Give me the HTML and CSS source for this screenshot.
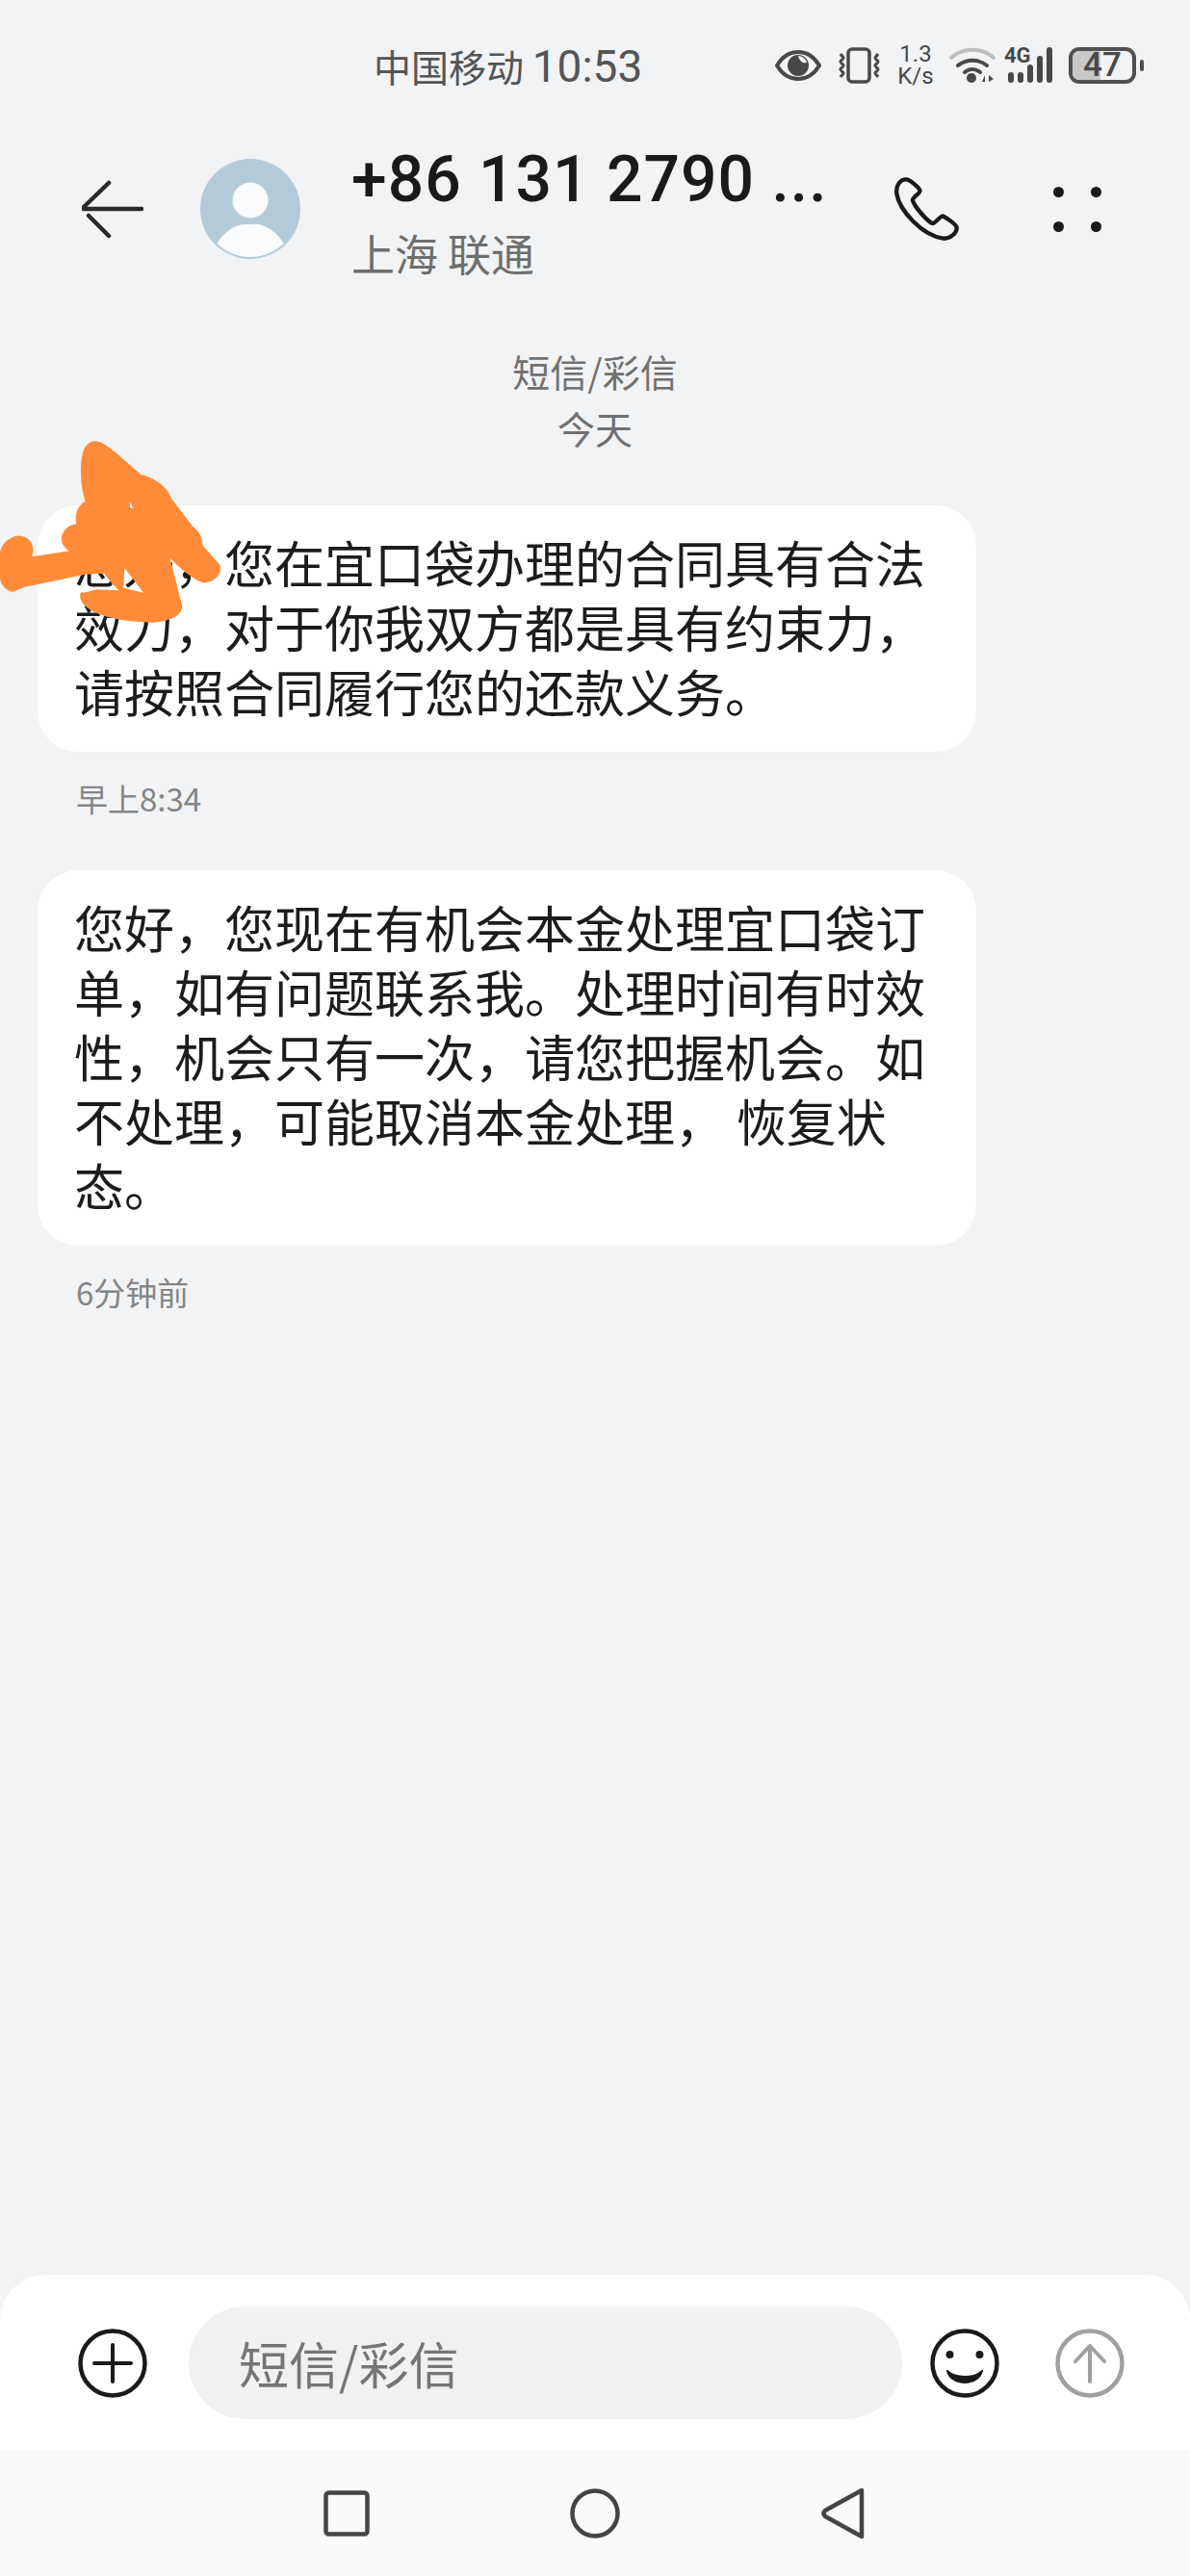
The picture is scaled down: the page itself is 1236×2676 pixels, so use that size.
FILE: index.html
```html
<!DOCTYPE html>
<html lang="zh-CN">
<head>
    <meta charset="UTF-8">
    <title>短信/彩信</title>
    <link rel="stylesheet" href="styles.css">
</head>
<body>
    <div class="status-bar">
        <div class="carrier">中国移动 <span class="clock">10:53</span></div>
        <div class="status-icons">
            <svg class="icon-eye" width="48" height="32" viewBox="0 0 48 32">
                <path d="M2 16C8 6 16 2 24 2s16 4 22 14c-6 10-14 14-22 14S8 26 2 16z" fill="none" stroke="#484848" stroke-width="4" stroke-linejoin="round"/>
                <circle cx="24" cy="16" r="11" fill="#484848"/>
                <path d="M24 6c4 0 8 3 9 7-3 1-7 0-9-7z" fill="#f2f3f5"/>
            </svg>
            <svg class="icon-vibrate" width="46" height="38" viewBox="0 0 46 38">
                <rect x="11" y="2" width="22" height="34" rx="4" fill="none" stroke="#484848" stroke-width="3.5"/>
                <path d="M3 7l3 4-3 4 3 4-3 4 3 4-3 4M42 7l-3 4 3 4-3 4 3 4-3 4 3 4" fill="none" stroke="#484848" stroke-width="3.2" stroke-linejoin="round"/>
            </svg>
            <div class="net-speed">
                <span>1.3</span>
                <span>K/s</span>
            </div>
            <svg class="icon-wifi" width="48" height="38" viewBox="0 0 48 38">
                <path d="M2 11C14 0 34 0 46 11" fill="none" stroke="#bdbdbd" stroke-width="4" stroke-linecap="round"/>
                <path d="M9 19c9-7 21-7 30 0" fill="none" stroke="#484848" stroke-width="4" stroke-linecap="round"/>
                <path d="M16 26c5-4 11-4 16 0" fill="none" stroke="#484848" stroke-width="4" stroke-linecap="round"/>
                <circle cx="23" cy="32" r="5" fill="#484848"/>
                <path d="M34 36l3-7v7zM41 29l5 4-5 3z" fill="#484848"/>
            </svg>
            <div class="signal">
                <span class="signal-label">4G</span>
                <svg width="52" height="38" viewBox="0 0 52 38">
                    <g stroke="#484848" stroke-width="6" stroke-linecap="round">
                        <path d="M3 29v5M13 29v5M23 21v13M33 12v22M43 3v31"/>
                    </g>
                </svg>
            </div>
            <div class="battery">
                <div class="battery-body">
                    <div class="battery-level"></div>
                    <span class="battery-text">47</span>
                </div>
                <div class="battery-tip"></div>
            </div>
        </div>
    </div>

    <div class="top-bar">
        <svg class="back-icon" width="64" height="62" viewBox="0 0 64 62">
            <path d="M2 31h60M2 29L28 4M7 38l21 21" fill="none" stroke="#2a2a2a" stroke-width="4.5" stroke-linecap="round"/>
        </svg>
        <svg class="avatar" width="104" height="104" viewBox="0 0 104 104">
            <defs>
                <clipPath id="avatar-clip"><circle cx="52" cy="52" r="50"/></clipPath>
            </defs>
            <circle cx="52" cy="52" r="52" fill="#b3cbd9"/>
            <circle cx="52" cy="43" r="18.5" fill="#f9fbfc"/>
            <path d="M17 89C24 75 38 68 46 68h12c8 0 22 7 29 21v15H17z" fill="#f9fbfc" clip-path="url(#avatar-clip)"/>
        </svg>
        <div class="contact">
            <div class="contact-number">+86 131 2790 ...</div>
            <div class="contact-place">上海 联通</div>
        </div>
        <svg class="call-icon" width="68" height="68" viewBox="85 40 205 205">
            <path d="M125 50C105 50 92 70 95 95c10 55 80 130 145 140 25 2 45-20 43-35-3-10-33-30-43-35-10 0-25 25-33 23-17-8-57-53-62-73 0-10 23-20 23-30-3-10-33-35-43-35z" fill="none" stroke="#1a1a1a" stroke-width="13" stroke-linejoin="round"/>
        </svg>
        <div class="more-dots">
            <span class="dot"></span>
            <span class="dot"></span>
            <span class="dot"></span>
            <span class="dot"></span>
        </div>
    </div>

    <div class="thread-head">
        <div>短信/彩信</div>
        <div>今天</div>
    </div>

    <div class="messages">
        <div class="bubble">您好，您在宜口袋办理的合同具有合法效力，对于你我双方都是具有约束力，请按照合同履行您的还款义务。</div>
        <div class="msg-time">早上8:34</div>

        <div class="bubble">您好，您现在有机会本金处理宜口袋订单，如有问题联系我。处理时间有时效性，机会只有一次，请您把握机会。如不处理，可能取消本金处理， 恢复状态。</div>
        <div class="msg-time">6分钟前</div>
    </div>

    <div class="composer">
        <svg class="composer-icon" width="72" height="72" viewBox="0 0 72 72">
            <circle cx="36" cy="36" r="33.5" fill="none" stroke="#1a1a1a" stroke-width="4.5"/>
            <path d="M17 36h38M36 17v38" fill="none" stroke="#1a1a1a" stroke-width="4" stroke-linecap="round"/>
        </svg>
        <div class="composer-input">短信/彩信</div>
        <svg class="composer-icon" width="72" height="72" viewBox="0 0 72 72">
            <circle cx="36" cy="36" r="33.5" fill="none" stroke="#1a1a1a" stroke-width="4.5"/>
            <circle cx="20.5" cy="27" r="4" fill="#1a1a1a"/>
            <circle cx="51.5" cy="27" r="4" fill="#1a1a1a"/>
            <path d="M18 44c4 16 32 16 36 0-8 8-28 8-36 0z" fill="#1a1a1a" stroke="#1a1a1a" stroke-width="2" stroke-linejoin="round"/>
        </svg>
        <svg class="composer-icon send-icon" width="72" height="72" viewBox="0 0 72 72">
            <circle cx="36" cy="36" r="33.5" fill="none" stroke="#a0a0a0" stroke-width="4.5"/>
            <path d="M36 55V18M21 34l15-16 15 16" fill="none" stroke="#a0a0a0" stroke-width="4" stroke-linecap="round" stroke-linejoin="round"/>
        </svg>
    </div>

    <div class="nav-bar">
        <div class="nav-cell">
            <svg width="48" height="48" viewBox="0 0 48 48">
                <rect x="2.5" y="2.5" width="43" height="43" rx="3" fill="none" stroke="#444" stroke-width="4.5"/>
            </svg>
        </div>
        <div class="nav-cell">
            <svg width="52" height="52" viewBox="0 0 52 52">
                <circle cx="26" cy="26" r="23.5" fill="none" stroke="#444" stroke-width="4.5"/>
            </svg>
        </div>
        <div class="nav-cell">
            <svg width="46" height="54" viewBox="0 0 46 54">
                <path d="M42 3v48L4 30c-2-2-2-4 0-6z" fill="none" stroke="#444" stroke-width="4.5" stroke-linejoin="round"/>
            </svg>
        </div>
    </div>

    <svg class="scribble" width="250" height="210" viewBox="0 0 750 630">
        <path fill-rule="evenodd" fill="#ff8b38" d="M300 25C330 30 360 60 440 130C490 140 525 175 535 205L600 290C630 310 630 340 632 350L685 410C695 440 665 470 630 465C600 455 560 420 530 390L568 540C565 570 530 585 480 590C400 590 300 575 262 535C245 515 245 490 262 497L300 487L370 490L345 465L325 437L265 440L75 480L40 495C15 490 0 470 -2 440L0 370C10 335 40 318 65 320C95 325 110 350 100 385L215 367C190 350 185 325 200 305C210 290 225 285 238 283C232 260 238 230 265 212C250 160 248 100 258 60C265 35 285 22 300 25ZM388 420L447 497L385 482ZM405 215L417 235L405 232Z"/>
    </svg>
</body>
</html>
```

FILE: styles.css
```css
body {
    margin: 0;
    width: 1236px;
    height: 2676px;
    display: flex;
    flex-direction: column;
    background-color: #f2f3f5;
    font-family: "Noto Sans CJK SC", "Noto Sans", sans-serif;
    color: #1c1c1c;
    overflow: hidden;
}

/* status bar */
.status-bar {
    height: 136px;
    display: flex;
    align-items: center;
    justify-content: space-between;
    padding: 0 48px 0 388px;
    box-sizing: border-box;
}

.carrier {
    font-size: 39px;
    color: #555;
    white-space: nowrap;
}

.clock {
    font-family: Roboto, sans-serif;
    font-size: 46px;
}

.status-icons {
    display: flex;
    align-items: center;
}

.icon-eye {
    margin-right: 17px;
}

.icon-vibrate {
    margin-right: 15px;
}

.net-speed {
    width: 40px;
    display: flex;
    flex-direction: column;
    align-items: center;
    font-family: Roboto, sans-serif;
    font-size: 24px;
    line-height: 23px;
    color: #484848;
    margin-right: 15px;
}

.icon-wifi {
    margin-right: 9px;
}

.signal {
    position: relative;
    width: 56px;
    height: 38px;
    margin-right: 11px;
    display: flex;
    justify-content: flex-end;
}

.signal-label {
    position: absolute;
    left: 0;
    top: -3px;
    font-family: Roboto, sans-serif;
    font-weight: 700;
    font-size: 22px;
    line-height: 24px;
    color: #484848;
}

.battery {
    display: flex;
    align-items: center;
}

.battery-body {
    position: relative;
    width: 70px;
    height: 38px;
    box-sizing: border-box;
    border: 4px solid #505050;
    border-radius: 11px;
    display: flex;
    align-items: center;
    justify-content: center;
}

.battery-level {
    position: absolute;
    left: 0;
    top: 0;
    bottom: 0;
    width: 47%;
    border-radius: 7px 0 0 7px;
    background-color: #c8c8c8;
}

.battery-text {
    position: relative;
    font-family: Roboto, sans-serif;
    font-weight: 500;
    font-size: 35px;
    line-height: 30px;
    color: #484848;
}

.battery-tip {
    width: 4px;
    height: 12px;
    margin-left: 4px;
    border-radius: 2px;
    background-color: #505050;
}

/* contact header */
.top-bar {
    height: 162px;
    display: flex;
    align-items: center;
    padding-left: 85px;
}

.avatar {
    margin-left: 59px;
}

.contact {
    width: 563px;
    margin-left: 53px;
    padding-top: 6px;
}

.contact-number {
    font-family: Roboto, sans-serif;
    font-weight: 500;
    font-size: 66px;
    line-height: 76px;
    letter-spacing: 1px;
    color: #1a1a1a;
    white-space: nowrap;
}

.contact-place {
    margin-top: 10px;
    font-size: 45px;
    line-height: 56px;
    color: #6e6e6e;
}

.more-dots {
    width: 50px;
    margin-left: 98px;
    display: grid;
    grid-template-columns: 11px 11px;
    justify-content: space-between;
    row-gap: 25px;
}

.dot {
    width: 11px;
    height: 11px;
    border-radius: 50%;
    background-color: #1a1a1a;
}

/* date and kind of thread */
.thread-head {
    padding-top: 58px;
    text-align: center;
    font-size: 39px;
    line-height: 59px;
    color: #707070;
}

/* messages */
.messages {
    padding: 51px 0 0 39px;
}

.bubble {
    width: 975px;
    box-sizing: border-box;
    padding: 25px 38px 30px;
    background-color: #fff;
    border-radius: 42px;
    font-size: 52px;
    line-height: 67px;
}

.msg-time {
    font-size: 33px;
    line-height: 44px;
    margin: 26px 0 53px 40px;
    color: #858585;
}

/* input row */
.composer {
    margin-top: auto;
    height: 183px;
    display: flex;
    align-items: center;
    padding-left: 81px;
    background-color: #fff;
    border-radius: 48px 48px 0 0;
}

.composer-input {
    width: 741px;
    height: 117px;
    margin: 0 29px 0 43px;
    padding-left: 52px;
    box-sizing: border-box;
    border-radius: 59px;
    background-color: #f1f1f1;
    font-size: 52px;
    line-height: 117px;
    color: #757575;
}

.send-icon {
    margin-left: 58px;
}

/* system navigation */
.nav-bar {
    height: 130px;
    display: flex;
    justify-content: center;
    align-items: center;
    background-color: #fafafa;
}

.nav-cell {
    width: 258px;
    display: flex;
    justify-content: center;
}

.scribble {
    position: absolute;
    left: 0;
    top: 450px;
}
```
